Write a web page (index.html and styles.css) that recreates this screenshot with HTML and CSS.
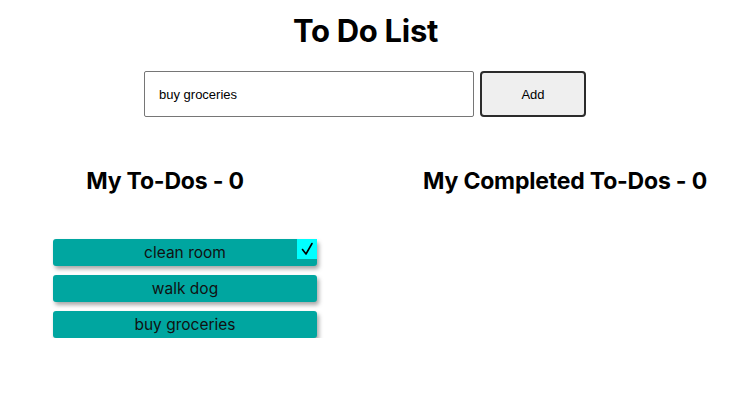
FILE: index.html
```html
<!DOCTYPE html>
<html>
<head>
<meta charset="utf-8">
<link rel="stylesheet" href="styles.css">
</head>
<body>
<div class="app">
  <h1 class="title">To Do List</h1>
  <div class="entry">
    <input class="entry-input" type="text" value="buy groceries">
    <button class="entry-btn">Add</button>
  </div>
  <div class="columns">
    <div class="col col-left">
      <h2 class="col-title">My To-Dos - 0</h2>
      <ul class="list">
        <li class="item">clean room<span class="check"><svg class="check-icon" viewBox="0 0 20 20" width="20" height="20"><polyline points="5.5,10.5 9,15 15,4.5" fill="none" stroke="#000" stroke-width="1.6" stroke-linecap="round" stroke-linejoin="round"/></svg></span></li>
        <li class="item">walk dog</li>
        <li class="item">buy groceries</li>
      </ul>
    </div>
    <div class="col col-right">
      <h2 class="col-title">My Completed To-Dos - 0</h2>
    </div>
  </div>
</div>
</body>
</html>
```

FILE: styles.css
```css
html, body {
  margin: 0;
  padding: 0;
  background: #fff;
}
body {
  font-family: "Inter", "Liberation Sans", Arial, sans-serif;
  color: #000;
}
.app {
  display: flex;
  flex-direction: column;
  align-items: stretch;
}
.title {
  margin: 12px 0 0;
  text-align: center;
  font-size: 31px;
  font-weight: 700;
  line-height: 38px;
  letter-spacing: -0.3px;
}
.entry {
  display: flex;
  justify-content: center;
  gap: 6px;
  margin-top: 21px;
  padding-right: 1px;
}
.entry-input {
  box-sizing: border-box;
  width: 330px;
  height: 46px;
  margin: 0;
  padding: 0 14px;
  border: 1px solid #767676;
  border-radius: 2px;
  font-family: "Liberation Sans", Arial, sans-serif;
  font-size: 13px;
  color: #000;
  outline: none;
}
.entry-btn {
  box-sizing: border-box;
  width: 106px;
  height: 46px;
  margin: 0;
  border: 2px solid #2b2b2b;
  border-radius: 4px;
  background: #efefef;
  font-family: "Liberation Sans", Arial, sans-serif;
  font-size: 13px;
  color: #000;
}
.columns {
  display: flex;
  margin-top: 50px;
  padding-left: 33px;
  gap: 113px;
}
.col-left {
  width: 264px;
}
.col-right {
  width: 310px;
}
.col-title {
  margin: 0;
  text-align: center;
  font-size: 23px;
  font-weight: 700;
  line-height: 28px;
  letter-spacing: -0.2px;
}
.list {
  list-style: none;
  margin: 44px 0 0 20px;
  padding: 0;
  display: flex;
  flex-direction: column;
  gap: 9px;
  width: 264px;
}
.item {
  position: relative;
  height: 27px;
  line-height: 27px;
  text-align: center;
  background: #00a6a0;
  border-radius: 3px;
  box-shadow: 2px 3px 4px rgba(0, 0, 0, 0.35);
  font-size: 15.5px;
  color: #111;
}
.check {
  position: absolute;
  right: 0;
  top: 0;
  width: 20px;
  height: 20px;
  background: #00ffff;
}
.check-icon {
  display: block;
}
```
